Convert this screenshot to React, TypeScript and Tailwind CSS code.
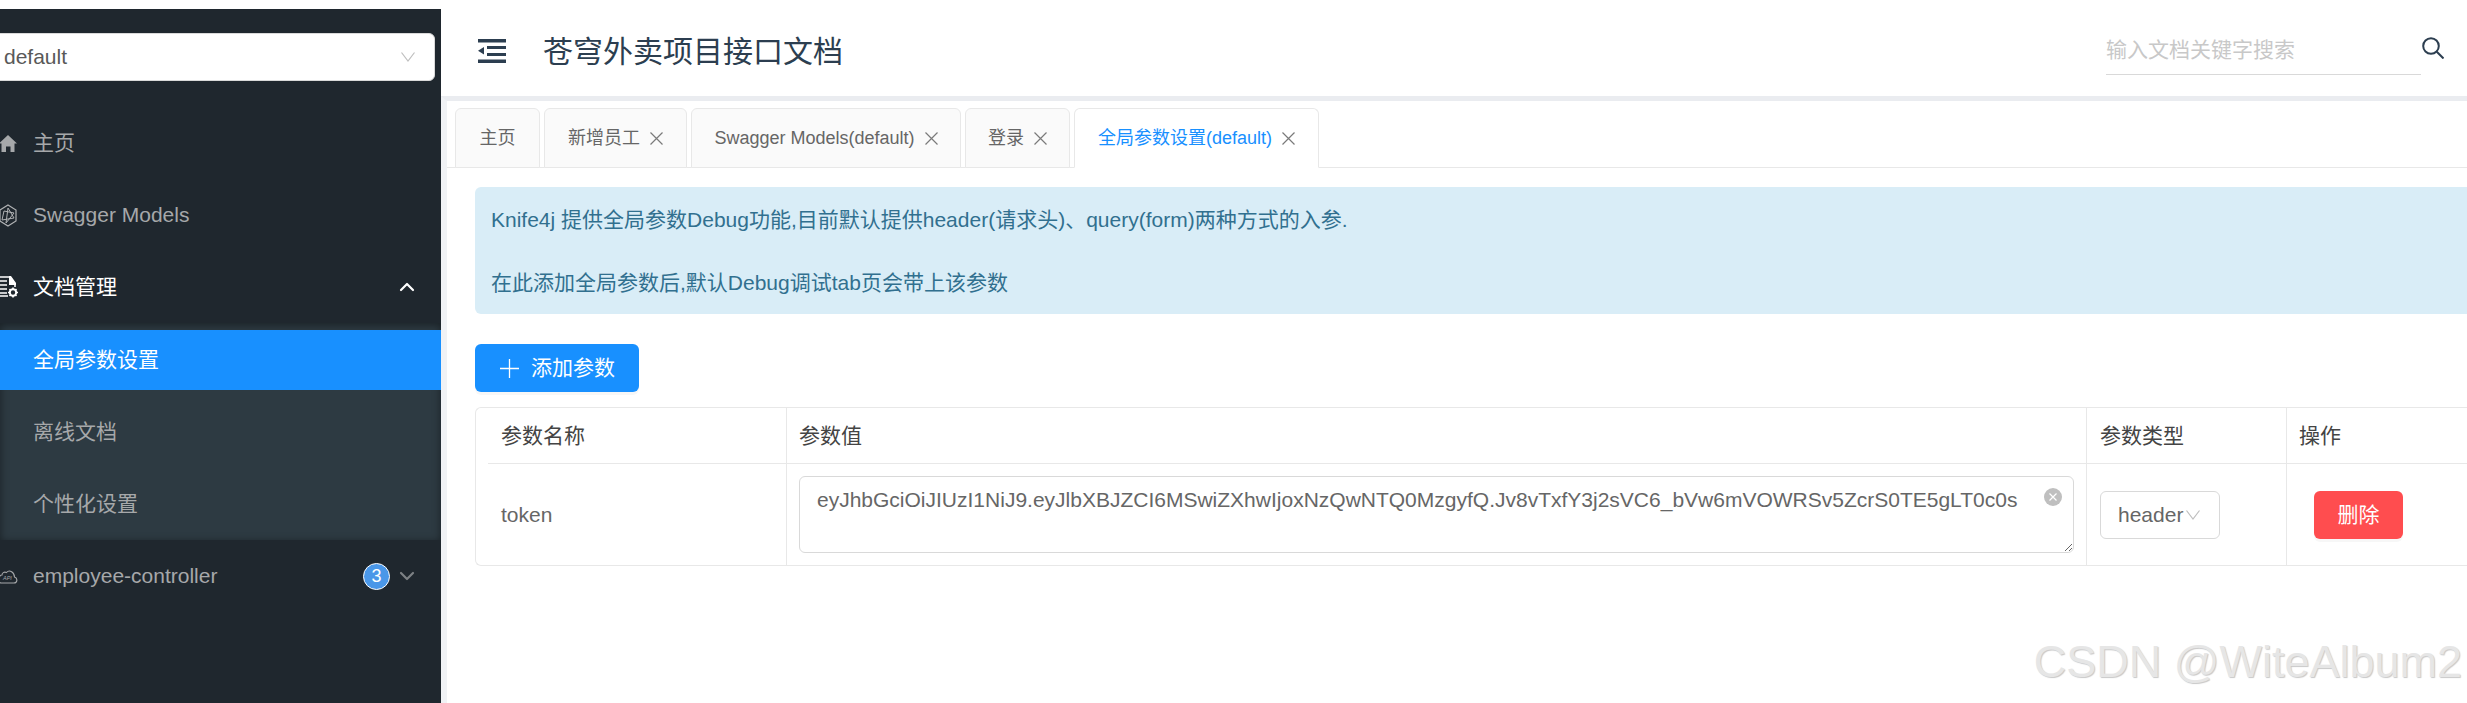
import React from 'react';
import { ChevronDown, ChevronUp } from 'lucide-react';

const TOKEN = 'eyJhbGciOiJIUzI1NiJ9.eyJlbXBJZCI6MSwiZXhwIjoxNzQwNTQ0MzgyfQ.Jv8vTxfY3j2sVC6_bVw6mVOWRSv5ZcrS0TE5gLT0c0s';

const HomeIcon = () => (
  <svg viewBox="0 0 22 17" className="w-[22px] h-[17px] -ml-[5px] shrink-0" fill="#a6a8aa">
    <path d="M13 0 L22 8.5 H19.5 V17 H15.5 V11.5 H11 V17 H6.5 V8.5 H4 Z" />
  </svg>
);

const ModelsIcon = () => (
  <svg viewBox="0 0 22 23" className="w-[22px] h-[23px] -ml-[5px] shrink-0" fill="none" stroke="#b0b2b4" strokeWidth="1.2">
    <path d="M13 1 L21 6 V17 L13 22 L5 17 V6 Z" />
    <path d="M13 4 L19 14 L7 16 L9 7 L19 9 L11 19 Z" strokeWidth="1" />
  </svg>
);

const DocGearIcon = () => (
  <svg viewBox="0 0 23 22" className="w-[23px] h-[22px] -ml-[5px] shrink-0">
    <path d="M4 1 H15 M15 1 L20 8 V11 M13 20 H4" fill="none" stroke="#fff" strokeWidth="1.6" />
    <path d="M14 0 H16 L21 7 V9 H14 Z" fill="#fff" />
    <path d="M4 5 H12 M4 9 H12 M4 13 H12 M4 17 H12" stroke="#fff" strokeWidth="1.5" />
    <circle cx="18" cy="16.5" r="3.2" fill="none" stroke="#fff" strokeWidth="2" />
    <path d="M18 11.5 V13 M18 20 V21.5 M13 16.5 H14.5 M21.5 16.5 H23 M14.5 13 L15.6 14.1 M20.4 18.9 L21.5 20 M21.5 13 L20.4 14.1 M15.6 18.9 L14.5 20" stroke="#fff" strokeWidth="1.6" />
  </svg>
);

const CloudApiIcon = () => (
  <svg viewBox="0 0 23 15" className="w-[23px] h-[15px] -ml-[5px] shrink-0" fill="none" stroke="#a6a8aa" strokeWidth="1.1">
    <path d="M6 14 H19 C22.5 14 23 9 19.5 8 C19.5 3.5 14.5 0 11.5 3.5 C9 2.5 7 4 7 6 C3.5 6 2.5 14 6 14 Z" />
    <text x="8" y="11" fontSize="5.5" fontStyle="italic" fill="#a6a8aa" stroke="none">API</text>
  </svg>
);

const MenuToggleIcon = () => (
  <svg viewBox="0 0 28 24" className="w-[28px] h-[24px] shrink-0" fill="#2c3e50">
    <rect x="0" y="0" width="28" height="3.5" />
    <rect x="9" y="7" width="19" height="3" />
    <rect x="9" y="14" width="19" height="3" />
    <rect x="0" y="20.5" width="28" height="3.5" />
    <path d="M6 8 V15.5 L0 11.7 Z" />
  </svg>
);

const SearchIcon = () => (
  <svg viewBox="0 0 22 22" className="w-[22px] h-[22px] shrink-0" fill="none" stroke="#2c3e50" strokeWidth="2">
    <circle cx="9" cy="9" r="7.8" />
    <path d="M14.8 14.8 L21.5 21.5" />
  </svg>
);

const CloseX = () => (
  <svg viewBox="0 0 13 13" className="w-[13px] h-[13px] shrink-0" fill="none" stroke="#7a7a7a" strokeWidth="1.2">
    <path d="M0.5 0.5 L12.5 12.5 M12.5 0.5 L0.5 12.5" />
  </svg>
);

const tabs = [
  { label: '主页', width: 'w-[85px]', closable: false, active: false },
  { label: '新增员工', width: 'w-[143px]', closable: true, active: false },
  { label: 'Swagger Models(default)', width: 'w-[270px]', closable: true, active: false },
  { label: '登录', width: 'w-[105px]', closable: true, active: false },
  { label: '全局参数设置(default)', width: 'w-[245px]', closable: true, active: true },
];

const MenuItem = ({ icon, label, white }: { icon: React.ReactNode; label: string; white?: boolean }) => (
  <div className={`h-[72px] flex items-center gap-[16px] text-[21px] ${white ? 'text-white' : 'text-[#a6a8aa]'}`}>
    {icon}
    <span>{label}</span>
  </div>
);

const App: React.FC = () => {
  return (
    <div className="relative w-[2467px] h-[703px] overflow-hidden flex bg-white font-['Liberation_Sans','Noto_Sans_CJK_SC',sans-serif]">
      <aside className="w-[441px] shrink-0 mt-[9px] pt-[24px] bg-[#1f272e] flex flex-col">
        <div className="h-[48px] ml-[-12px] mr-[6px] pl-[15px] pr-[19px] bg-white border border-[#d9d9d9] rounded-[6px] flex items-center justify-between text-[21px] text-[#595959]">
          <span>default</span>
          <svg viewBox="0 0 14 10" className="w-[14px] h-[10px]" fill="none" stroke="#bfbfbf" strokeWidth="1.2">
            <path d="M0.5 0.5 L7 9 L13.5 0.5" />
          </svg>
        </div>

        <nav className="mt-[26px] flex flex-col">
          <MenuItem icon={<HomeIcon />} label="主页" />
          <MenuItem icon={<ModelsIcon />} label="Swagger Models" />
          <div className="h-[72px] flex items-center justify-between pr-[22px]">
            <div className="flex items-center gap-[15px] text-[21px] text-white">
              <DocGearIcon />
              <span>文档管理</span>
            </div>
            <ChevronUp size={24} strokeWidth={2.2} className="text-white" />
          </div>

          <div className="pt-[7px] pb-[6px] flex flex-col gap-[12px] bg-[#2d3a42] shadow-[inset_0_2px_8px_rgba(0,0,0,0.45)] text-[21px] text-[#a6a8aa]">
            <div className="h-[60px] pl-[33px] flex items-center bg-[#1890ff] text-white">全局参数设置</div>
            <div className="h-[60px] pl-[33px] flex items-center">离线文档</div>
            <div className="h-[60px] pl-[33px] flex items-center">个性化设置</div>
          </div>

          <div className="h-[72px] flex items-center justify-between pr-[22px]">
            <div className="flex items-center gap-[15px] text-[21px] text-[#a6a8aa]">
              <CloudApiIcon />
              <span>employee-controller</span>
            </div>
            <div className="flex items-center gap-[5px]">
              <span className="w-[27px] h-[27px] rounded-full bg-[#4a97e8] border-[1.5px] border-white flex items-center justify-center text-[18px] text-white">3</span>
              <ChevronDown size={24} strokeWidth={2.2} className="text-[#7d8184]" />
            </div>
          </div>
        </nav>
      </aside>

      <main className="flex-1 min-w-0 flex flex-col">
        <header className="h-[96px] shrink-0 pt-[6px] pl-[37px] pr-[23px] flex items-center justify-between">
          <div className="flex items-center gap-[37px]">
            <MenuToggleIcon />
            <h1 className="text-[30px] font-normal text-[#2c3e50]">苍穹外卖项目接口文档</h1>
          </div>
          <div className="flex items-center mt-[-1px]">
            <input
              type="text"
              placeholder="输入文档关键字搜索"
              className="w-[315px] h-[48px] border-b border-[#d9d9d9] text-[21px] outline-none placeholder:text-[#c8c8c8]"
            />
            <div className="ml-px -mt-[5px]"><SearchIcon /></div>
          </div>
        </header>

        <div className="flex-1 border-t-[5px] border-l-[6px] border-t-[#eaecf0] border-l-[#f0f2f5] pt-[7px]">
          <div className="flex gap-[4px] pl-[8px] border-b border-[#e8e8e8] h-[60px]">
            {tabs.map((tab) => (
              <div
                key={tab.label}
                className={`${tab.width} h-[60px] border border-[#e8e8e8] rounded-t-[6px] flex items-center justify-center gap-[10px] text-[18px] ${
                  tab.active ? 'bg-white border-b-white text-[#1890ff]' : 'bg-[#fafafa] text-[#666]'
                }`}
              >
                <span>{tab.label}</span>
                {tab.closable && <CloseX />}
              </div>
            ))}
          </div>

          <div className="pl-[28px] pt-[19px]">
            <div className="h-[127px] mr-[-20px] pl-[16px] pt-[16px] rounded-[6px] bg-[#d9edf7] text-[21px] leading-[33px] text-[#31708f]">
              <p>Knife4j 提供全局参数Debug功能,目前默认提供header(请求头)、query(form)两种方式的入参.</p>
              <p className="mt-[30px]">在此添加全局参数后,默认Debug调试tab页会带上该参数</p>
            </div>

            <button className="mt-[30px] w-[164px] h-[48px] pl-[25px] flex items-center gap-[12px] rounded-[6px] bg-[#1890ff] text-[21px] text-white shadow-[0_3px_0_rgba(0,0,0,0.03)]">
              <svg viewBox="0 0 19 19" className="w-[19px] h-[19px]" fill="none" stroke="#fff" strokeWidth="1.3">
                <path d="M9.5 0 V19 M0 9.5 H19" />
              </svg>
              添加参数
            </button>

            <div className="mt-[15px] mr-[-20px] border border-r-0 border-[#e8e8e8] rounded-l-[6px] text-[21px] text-[#666]">
              <div className="h-[56px] grid grid-cols-[311px_1300px_200px_1fr] text-[#444]">
                <div className="border-r border-[#e8e8e8] pl-[12px]">
                  <div className="h-full pl-[13px] border-b border-[#e8e8e8] flex items-center">参数名称</div>
                </div>
                <div className="border-r border-b border-[#e8e8e8] pl-[12px] flex items-center">参数值</div>
                <div className="border-r border-b border-[#e8e8e8] pl-[13px] flex items-center">参数类型</div>
                <div className="border-b border-[#e8e8e8] pl-[12px] flex items-center">操作</div>
              </div>
              <div className="h-[101px] grid grid-cols-[311px_1300px_200px_1fr]">
                <div className="border-r border-[#e8e8e8] pl-[25px] flex items-center">token</div>
                <div className="border-r border-[#e8e8e8] pl-[12px] flex items-center">
                  <div className="relative w-[1275px] h-[77px]">
                    <textarea
                      readOnly
                      defaultValue={TOKEN}
                      className="block w-full h-full pl-[17px] pr-[40px] pt-[6px] leading-[33px] border border-[#d9d9d9] rounded-[6px] outline-none text-[#666]"
                    />
                    <span className="absolute right-[12px] top-[12px] w-[18px] h-[18px] rounded-full bg-[#bfbfbf] flex items-center justify-center">
                      <svg viewBox="0 0 8 8" className="w-[8px] h-[8px]" fill="none" stroke="#fff" strokeWidth="1.2">
                        <path d="M0.5 0.5 L7.5 7.5 M7.5 0.5 L0.5 7.5" />
                      </svg>
                    </span>
                  </div>
                </div>
                <div className="border-r border-[#e8e8e8] pl-[13px] flex items-center">
                  <div className="w-[120px] h-[48px] pl-[17px] border border-[#d9d9d9] rounded-[6px] flex items-center gap-[3px]">
                    <span>header</span>
                    <svg viewBox="0 0 14 10" className="w-[14px] h-[10px]" fill="none" stroke="#bfbfbf" strokeWidth="1.2">
                      <path d="M0.5 0.5 L7 9 L13.5 0.5" />
                    </svg>
                  </div>
                </div>
                <div className="pl-[27px] flex items-center">
                  <button className="w-[89px] h-[48px] rounded-[6px] bg-[#ff4d4f] text-white text-[21px] shadow-[0_3px_0_rgba(0,0,0,0.03)]">删除</button>
                </div>
              </div>
            </div>
          </div>
        </div>
      </main>

      <span className="absolute right-[5px] top-[632px] text-[45px] leading-[60px] text-[#e6e6e6] [text-shadow:1px_1px_1px_#c8c8c8] pointer-events-none">CSDN @WiteAlbum2</span>
    </div>
  );
};

export default App;
